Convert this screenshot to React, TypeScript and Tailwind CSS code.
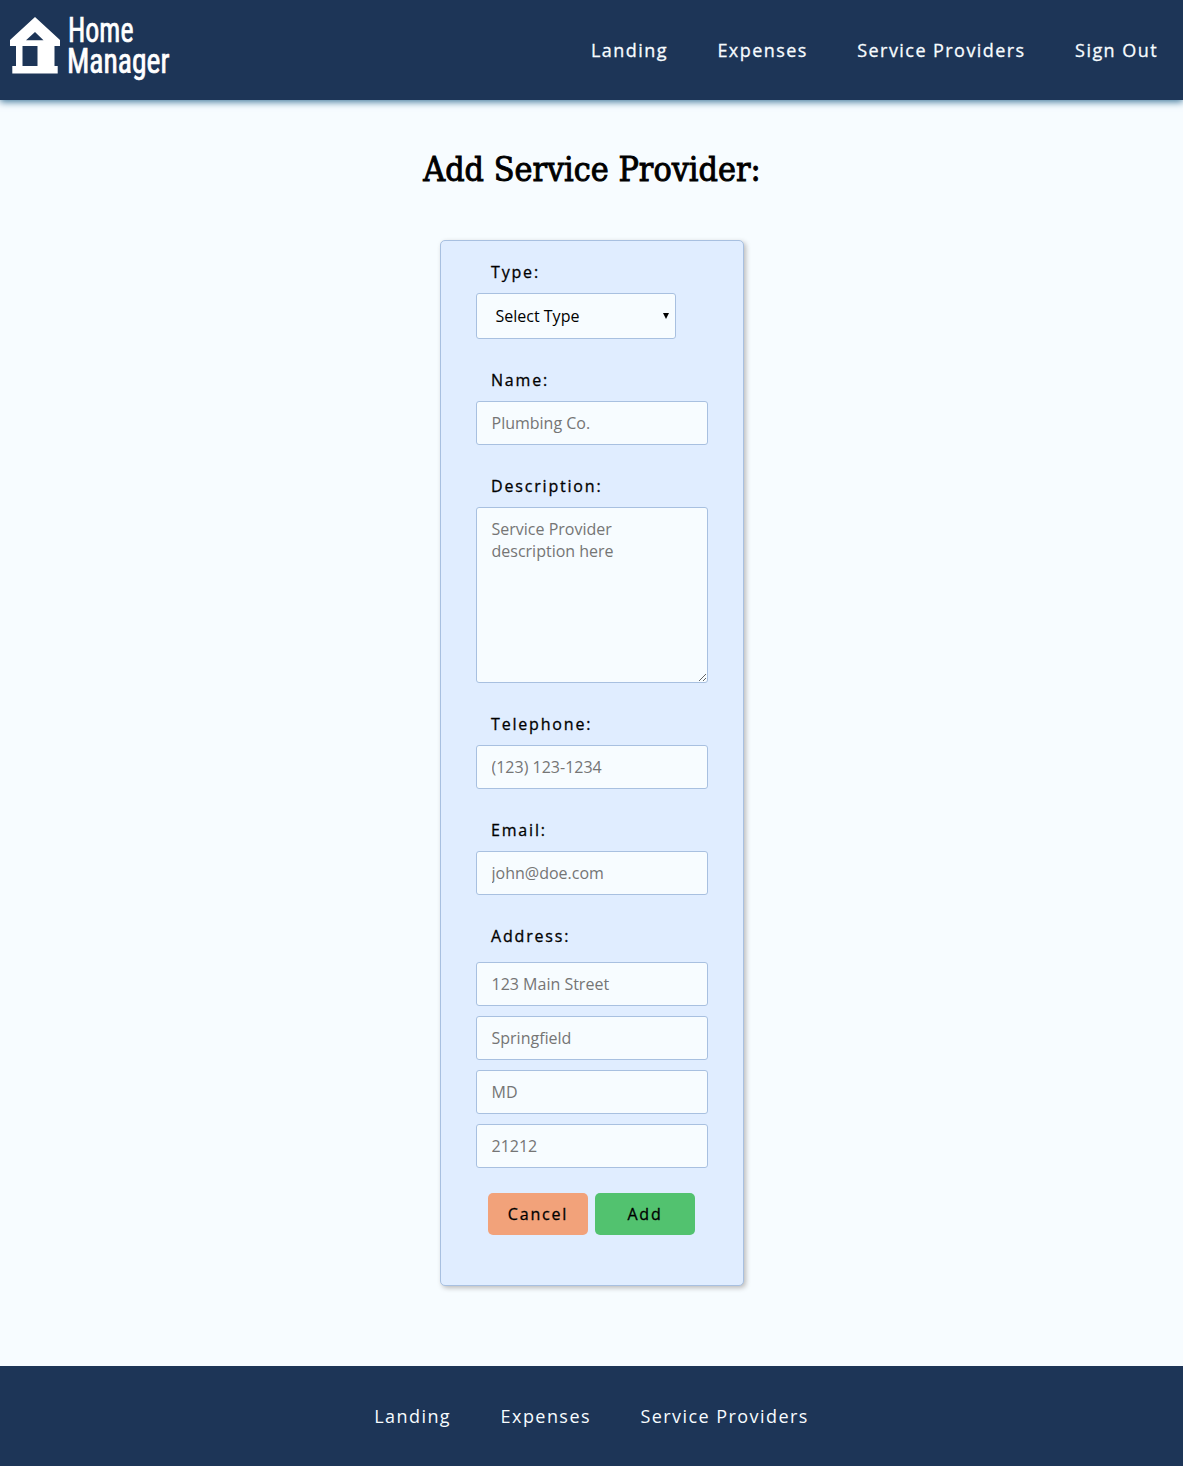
import type { ReactNode } from "react";

const control =
  "block w-[232px] rounded-[3px] border border-[#a8c0e0] bg-[#f7fcff] px-[14.5px] text-[16px] leading-[22px] text-black outline-none placeholder:text-[#757575]";

function Field({ label, children }: { label: string; children: ReactNode }) {
  return (
    <div className="mb-[30px]">
      <label className="mb-[10px] block pl-[15px] text-[16px] leading-[22px] tracking-[1.82px] [-webkit-text-stroke:0.3px_black]">
        {label}
      </label>
      {children}
    </div>
  );
}

function TextInput({ placeholder }: { placeholder: string }) {
  return <input className={`${control} h-[44px]`} placeholder={placeholder} />;
}

function Logo() {
  return (
    <svg className="block h-[100px] w-[190px]" viewBox="0 0 190 100" fill="white">
      <path
        fillRule="evenodd"
        d="M35 17 L60 40 V46 H54.5 V66 H57.7 V73.5 H12.3 V66 H16 V46 H10 V40 Z M35 32 L26 40.3 H43.5 Z M22.5 46 H37.5 V66 H22.5 Z"
      />
      <g
        fontFamily="'Roboto Condensed', Roboto, sans-serif"
        fontSize="34.5"
        stroke="white"
        strokeWidth="0.7"
      >
        <text x="68" y="42" textLength="65.5" lengthAdjust="spacingAndGlyphs">
          Home
        </text>
        <text x="67" y="73" textLength="102.5" lengthAdjust="spacingAndGlyphs">
          Manager
        </text>
      </g>
    </svg>
  );
}

export default function App() {
  return (
    <div className="flex h-[1466px] flex-col bg-[#f7fcff] font-['Open_Sans',sans-serif] text-black">
      <header className="flex h-[100px] shrink-0 items-center justify-between bg-[#1d3557] pr-[25px] shadow-[0_2px_7px_#457b9d]">
        <Logo />
        <nav className="flex gap-[49.5px] text-[18px] leading-[25px] tracking-[1.44px] text-[#f7fcff] [-webkit-text-stroke:0.3px_#f7fcff]">
          <a>Landing</a>
          <a>Expenses</a>
          <a>Service Providers</a>
          <a>Sign Out</a>
        </nav>
      </header>

      <main className="flex grow flex-col items-center">
        <h1 className="mt-[49px] h-[40px] origin-center scale-x-[0.893] text-[34px] leading-[40px] whitespace-nowrap font-['DejaVu_Serif',serif] [-webkit-text-stroke:1px_black]">
          Add Service Provider:
        </h1>
        <form className="mt-[51px] ml-px h-[1046px] w-[304px] rounded-[5px] border border-[#a8c0e0] bg-[#e0edff] px-[35px] pt-[20px] shadow-[2px_2px_5px_#bbb]">
          <Field label="Type:">
            <div className="flex h-[46px] w-[200px] items-center justify-between rounded-[3px] border border-[#a8c0e0] bg-[#f7fcff] pr-[6px] pl-[18.5px] text-[16px] leading-[22px]">
              <span>Select Type</span>
              <svg className="h-[6px] w-[6px]" viewBox="0 0 6 6">
                <path d="M0 0 H6 L3 6 Z" />
              </svg>
            </div>
          </Field>
          <Field label="Name:">
            <TextInput placeholder="Plumbing Co." />
          </Field>
          <Field label="Description:">
            <textarea
              className={`${control} h-[176px] resize py-[10px]`}
              placeholder="Service Provider description here"
            />
          </Field>
          <Field label="Telephone:">
            <TextInput placeholder="(123) 123-1234" />
          </Field>
          <Field label="Email:">
            <TextInput placeholder="john@doe.com" />
          </Field>
          <Field label="Address:">
            <div className="flex flex-col gap-[10px] pt-[5px]">
              <TextInput placeholder="123 Main Street" />
              <TextInput placeholder="Springfield" />
              <TextInput placeholder="MD" />
              <TextInput placeholder="21212" />
            </div>
          </Field>
          <div className="-mt-[5px] flex justify-center gap-[7px] pr-px text-[16px] leading-[22px] tracking-[1.82px] [-webkit-text-stroke:0.3px_black]">
            <button type="button" className="h-[42px] w-[100px] rounded-[5px] bg-[#f2a27a]">
              Cancel
            </button>
            <button type="button" className="h-[42px] w-[100px] rounded-[5px] bg-[#52c26f]">
              Add
            </button>
          </div>
        </form>
      </main>

      <footer className="flex h-[100px] shrink-0 items-center justify-center gap-[49.5px] bg-[#1d3557] text-[18px] leading-[25px] tracking-[1.44px] text-[#f7fcff]">
        <a>Landing</a>
        <a>Expenses</a>
        <a>Service Providers</a>
      </footer>
    </div>
  );
}
